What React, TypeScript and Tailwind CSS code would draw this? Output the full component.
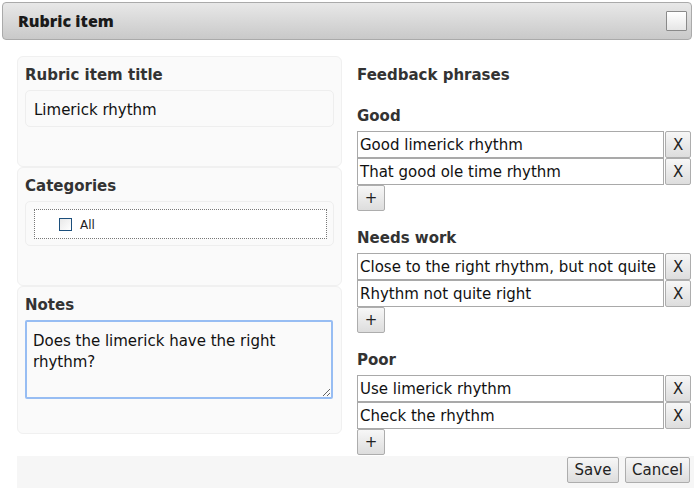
import React from "react";

const font = { fontFamily: '"DejaVu Sans", Verdana, sans-serif' };

function Btn({ children, className = "" }: { children: React.ReactNode; className?: string }) {
  return (
    <button
      className={
        "flex items-center justify-center border border-[#adadad] rounded-[2px] bg-linear-to-b from-[#f7f7f7] to-[#dddddd] text-[15px] text-[#222] leading-none " +
        className
      }
    >
      {children}
    </button>
  );
}

function Phrase({ text }: { text: string }) {
  return (
    <div className="flex h-[27px]">
      <div className="w-[308px] h-[27px] border border-[#a9a9a9] bg-white flex items-center pl-[2px] pt-px text-[15px] text-[#111]">
        {text}
      </div>
      <Btn className="ml-px w-[26px] h-[27px] pt-px">X</Btn>
    </div>
  );
}

function Section({ title, items, first }: { title: string; items: string[]; first?: boolean }) {
  return (
    <div className={first ? "mt-[23px]" : "mt-[18px]"}>
      <div className="text-[15px] leading-[18px] font-bold text-[#333] mb-[6px]">{title}</div>
      {items.map((t) => (
        <Phrase key={t} text={t} />
      ))}
      <Btn className="w-[28px] h-[26px]">+</Btn>
    </div>
  );
}

export default function App() {
  return (
    <div className="w-[694px] h-[488px] bg-white overflow-hidden text-[#222]" style={font}>
      <div className="mx-[2px] mt-[2px] h-[38px] border border-[#aaaaaa] rounded-[4px] bg-linear-to-b from-[#e8e8e8] to-[#c9c9c9] flex items-center justify-between pl-[15px] pr-[4px]">
        <span className="text-[16px] font-extrabold text-[#1a1a1a]" style={{ fontFamily: '"Open Sans", sans-serif' }}>
          Rubric item
        </span>
        <span className="w-[21px] h-[20px] border border-[#8a8a8a] rounded-[1px] bg-linear-to-b from-[#ffffff] to-[#e6e6e6]" />
      </div>

      <div className="flex items-start pl-[17px] gap-[15px]">
        <div className="w-[325px] mt-[16px] flex flex-col">
          <div className="h-[111px] bg-[#fafafa] border border-[#f0f0f0] rounded-[6px] px-[7px] pt-[9px]">
            <div className="text-[15px] leading-[18px] font-bold text-[#333] mb-[6px]">Rubric item title</div>
            <div className="h-[37px] border border-[#eeeeee] rounded-[5px] bg-[#fafafa] flex items-center pl-[8px] pt-[3px] text-[15px] text-[#111]">
              Limerick rhythm
            </div>
          </div>
          <div className="h-[119px] bg-[#fafafa] border border-[#f0f0f0] rounded-[6px] px-[7px] pt-[9px]">
            <div className="text-[15px] leading-[18px] font-bold text-[#333] mb-[6px]">Categories</div>
            <div className="h-[45px] border border-[#eeeeee] rounded-[5px] bg-[#fafafa] pl-[8px] pr-[6px] pt-[7px]">
              <div className="h-[30px] border border-dotted border-[#777] bg-white flex items-center pl-[24px]">
                <span className="w-[13px] h-[13px] border border-[#1c4f7c] bg-linear-to-br from-[#e8e8e8] to-[#ffffff]" />
                <span className="ml-[8px] text-[12px] text-[#222] pt-px">All</span>
              </div>
            </div>
          </div>
          <div className="h-[148px] bg-[#fafafa] border border-[#f0f0f0] rounded-[6px] px-[7px] pt-[9px]">
            <div className="text-[15px] leading-[18px] font-bold text-[#333] mb-[6px]">Notes</div>
            <textarea
              readOnly
              className="block w-[308px] h-[79px] border-2 border-[#97bdf3] rounded-[2px] bg-[#fafafa] px-[6px] pt-[9px] pb-[4px] text-[15px] leading-[21px] text-[#111] outline-none resize-y"
              style={font}
              defaultValue="Does the limerick have the right rhythm?"
            />
          </div>
        </div>

        <div className="w-[334px] pt-[26px]">
          <div className="text-[15px] leading-[18px] font-bold text-[#333]">Feedback phrases</div>
          <Section first title="Good" items={["Good limerick rhythm", "That good ole time rhythm"]} />
          <Section title="Needs work" items={["Close to the right rhythm, but not quite", "Rhythm not quite right"]} />
          <Section title="Poor" items={["Use limerick rhythm", "Check the rhythm"]} />
        </div>
      </div>

      <div className="ml-[17px] mt-px h-[40px] bg-[#f6f6f6] flex justify-end items-start pt-px pr-[4px] gap-[6px]">
        <Btn className="w-[52px] h-[26px] pt-px">Save</Btn>
        <Btn className="w-[65px] h-[26px] pt-px">Cancel</Btn>
      </div>
    </div>
  );
}
